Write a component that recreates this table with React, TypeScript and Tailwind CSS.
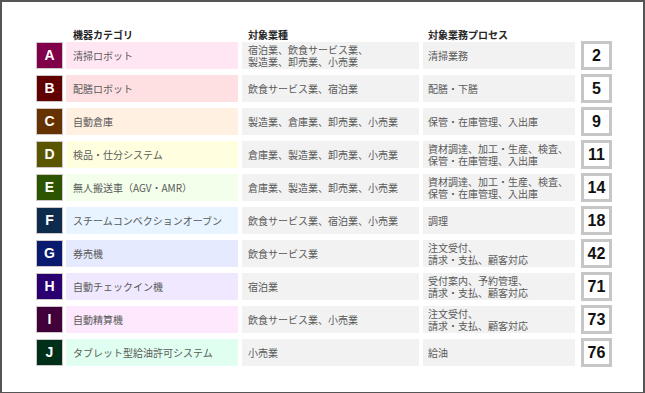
import React from "react";

const rows = [
  { l: "A", c: "bg-[#80004a]", b: "bg-[#ffe6f2]", name: "清掃ロボット", ind: ["宿泊業、飲食サービス業、", "製造業、卸売業、小売業"], proc: ["清掃業務"], n: 2 },
  { l: "B", c: "bg-[#600000]", b: "bg-[#ffe0e2]", name: "配膳ロボット", ind: ["飲食サービス業、宿泊業"], proc: ["配膳・下膳"], n: 5 },
  { l: "C", c: "bg-[#663300]", b: "bg-[#fff0e2]", name: "自動倉庫", ind: ["製造業、倉庫業、卸売業、小売業"], proc: ["保管・在庫管理、入出庫"], n: 9 },
  { l: "D", c: "bg-[#5a5600]", b: "bg-[#ffffe0]", name: "検品・仕分システム", ind: ["倉庫業、製造業、卸売業、小売業"], proc: ["資材調達、加工・生産、検査、", "保管・在庫管理、入出庫"], n: 11 },
  { l: "E", c: "bg-[#2d5500]", b: "bg-[#f3ffeb]", name: "無人搬送車（AGV・AMR）", ind: ["倉庫業、製造業、卸売業、小売業"], proc: ["資材調達、加工・生産、検査、", "保管・在庫管理、入出庫"], n: 14 },
  { l: "F", c: "bg-[#0d2c4d]", b: "bg-[#e8f4ff]", name: "スチームコンベクションオーブン", ind: ["飲食サービス業、宿泊業、小売業"], proc: ["調理"], n: 18 },
  { l: "G", c: "bg-[#0a1a6e]", b: "bg-[#e6eaff]", name: "券売機", ind: ["飲食サービス業"], proc: ["注文受付、", "請求・支払、顧客対応"], n: 42 },
  { l: "H", c: "bg-[#2a0070]", b: "bg-[#f0e8ff]", name: "自動チェックイン機", ind: ["宿泊業"], proc: ["受付案内、予約管理、", "請求・支払、顧客対応"], n: 71 },
  { l: "I", c: "bg-[#40003a]", b: "bg-[#fde8fd]", name: "自動精算機", ind: ["飲食サービス業、小売業"], proc: ["注文受付、", "請求・支払、顧客対応"], n: 73 },
  { l: "J", c: "bg-[#00301a]", b: "bg-[#e0fff0]", name: "タブレット型給油許可システム", ind: ["小売業"], proc: ["給油"], n: 76 },
];

const jp = { fontFamily: '"Noto Sans CJK JP", "Noto Sans", sans-serif' };
const en = { fontFamily: '"Liberation Sans", Arial, sans-serif' };

function Lines({ lines }: { lines: string[] }) {
  return (
    <div className="flex flex-col leading-[12px] whitespace-nowrap">
      {lines.map((t, i) => (
        <span key={i}>{t}</span>
      ))}
    </div>
  );
}

export default function App() {
  return (
    <div className="w-[645px] h-[393px] bg-white border-l-2 border-t-2 border-r-2 border-b border-[#555555] overflow-hidden">
      <div className="flex flex-col pt-[26px] pl-[34px]" style={jp}>
        <div className="flex items-end h-[13px] text-[10px] font-bold text-[#262626] leading-[13px]">
          <div className="w-[30px]" />
          <div className="w-[176px] pl-[7px]">機器カテゴリ</div>
          <div className="w-[181px] pl-[6px]">対象業種</div>
          <div className="pl-[5px]">対象業務プロセス</div>
        </div>
        <div className="flex flex-col gap-[4px] mt-[0px]">
          {rows.map((r) => (
            <div key={r.l} className="flex items-center h-[29px]">
              <div
                className={`w-[27px] h-[27px] ${r.c} border border-[#d0c8c8] text-white font-bold text-[14px] flex items-center justify-center`}
                style={en}
              >
                {r.l}
              </div>
              <div className={`ml-[3px] w-[172px] h-[27px] ${r.b} text-[10px] text-[#595959] flex items-center pl-[7px] whitespace-nowrap`}>
                {r.name}
              </div>
              <div className="ml-[4px] w-[177px] h-[27px] bg-[#f2f2f2] text-[10px] text-[#595959] flex items-center pl-[6px]">
                <Lines lines={r.ind} />
              </div>
              <div className="ml-[4px] w-[152px] h-[27px] bg-[#f2f2f2] text-[10px] text-[#595959] flex items-center pl-[5px]">
                <Lines lines={r.proc} />
              </div>
              <div
                className="ml-[6px] w-[31px] h-[29px] border-[3px] border-[#c6c6c6] bg-white flex items-center justify-center text-[16px] font-bold text-[#111111]"
                style={en}
              >
                {r.n}
              </div>
            </div>
          ))}
        </div>
      </div>
    </div>
  );
}
